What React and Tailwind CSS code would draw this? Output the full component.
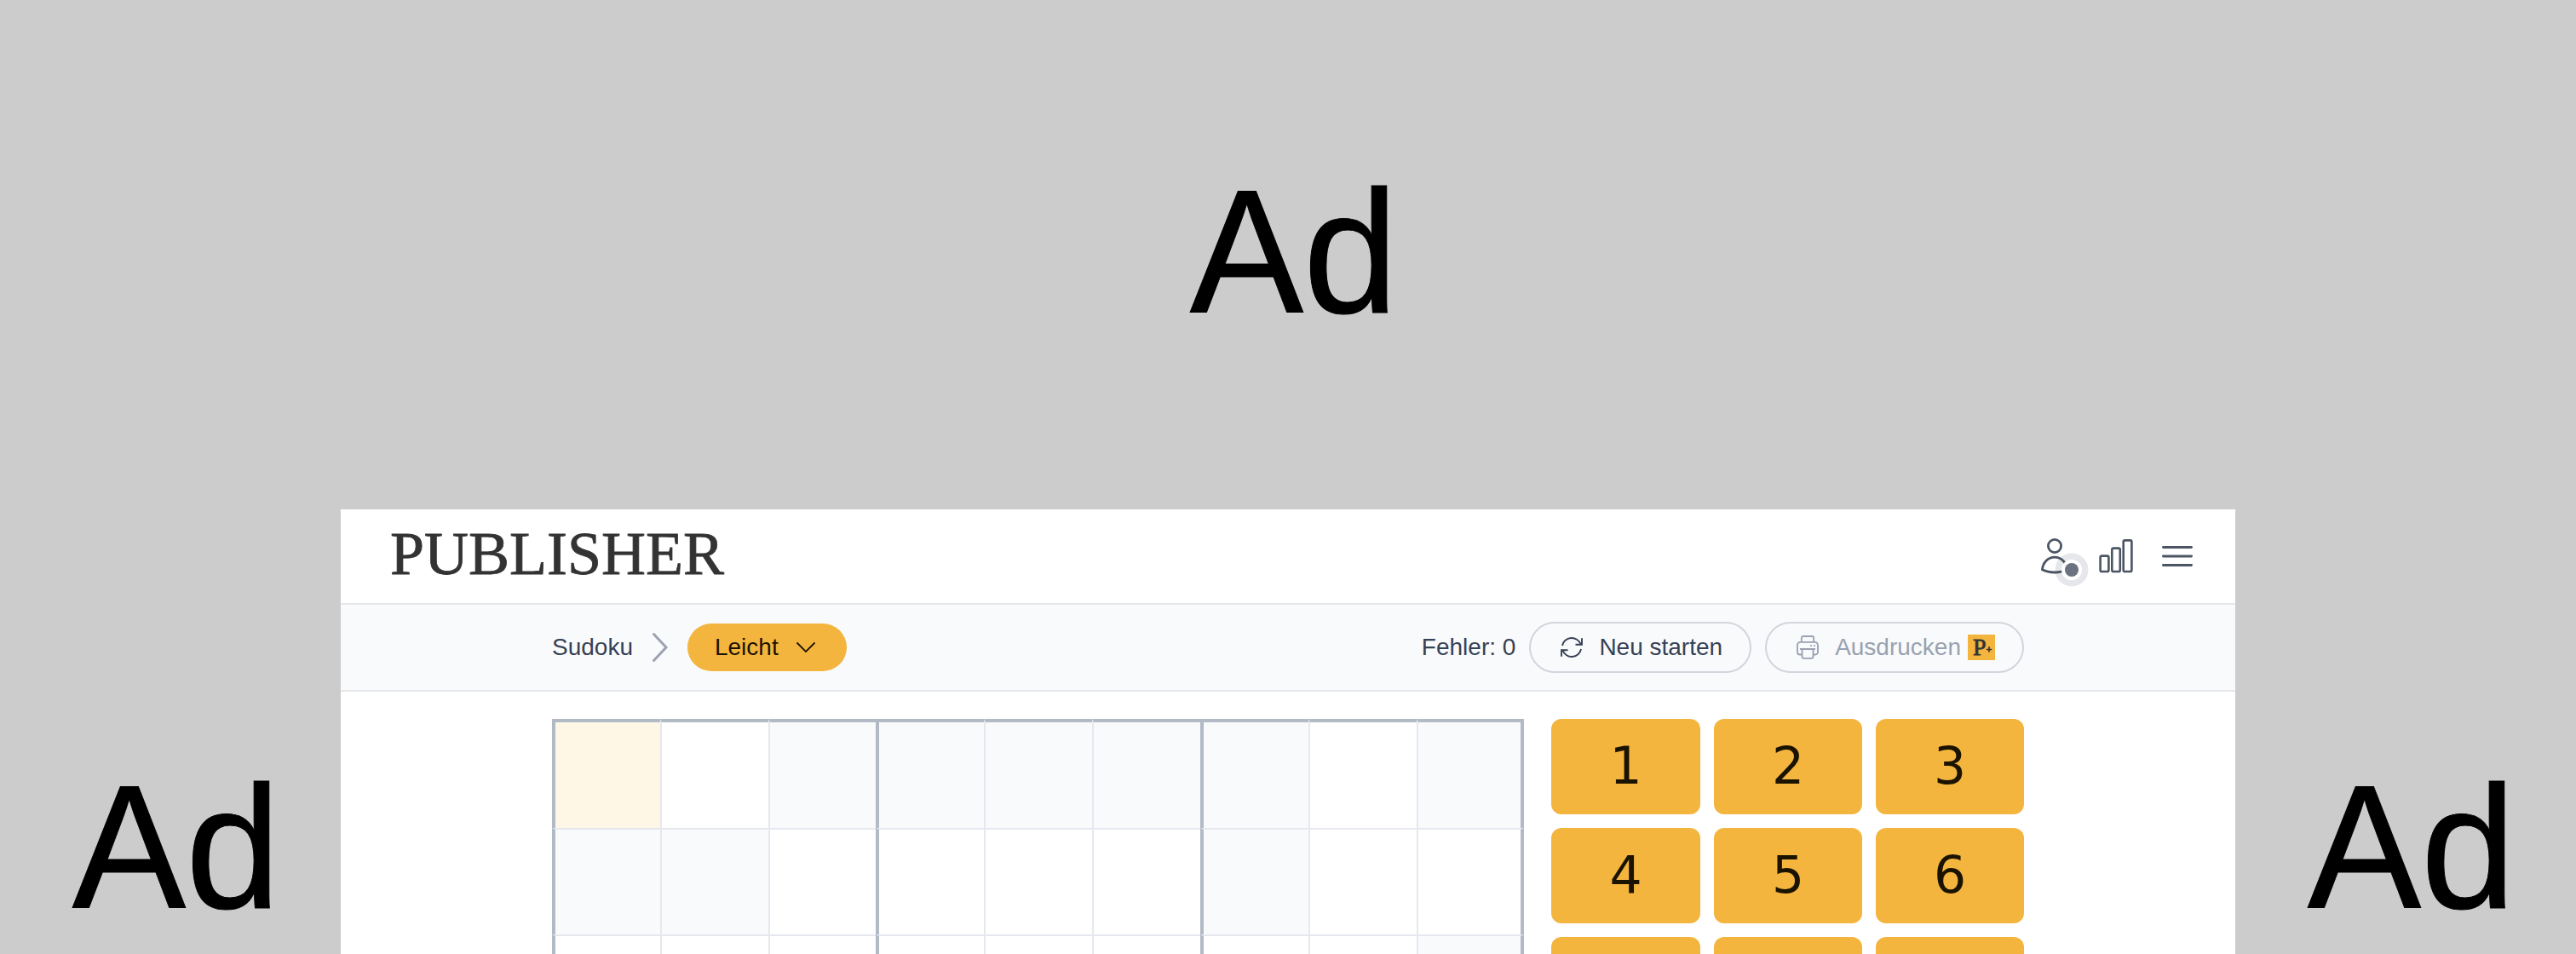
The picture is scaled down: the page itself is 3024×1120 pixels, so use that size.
import React, { useState } from 'react';
import { clsx } from 'clsx';

// s = shaded, w = white, a = active
const rows = ['awsssssws', 'sswwwwsww', 'wwwwwwwws'];

const Ad = ({ className }) => (
  <div className={clsx('flex items-center justify-center text-black', className)}>
    <span className="block text-[200px] leading-none scale-y-[1.03] [-webkit-text-stroke:1px_black]">Ad</span>
  </div>
);

const UserIcon = () => (
  <svg className="overflow-visible" width="48" height="48" viewBox="0 0 48 48" fill="none">
    <circle cx="44" cy="40" r="15.7" stroke="#e5e7eb" strokeWidth="7.5" />
    <g stroke="#4b5563" strokeWidth="2.8" strokeLinejoin="round">
      <circle cx="24" cy="12" r="7.6" />
      <path d="M9.4 39.8C10.3 31.4 16.2 25.2 24 25.2s13.700 6.200 14.600 14.600C34.100 42 29.200 43 24 43S13.900 42 9.400 39.800z" />
    </g>
    <circle cx="44" cy="40" r="12" fill="#fff" />
    <circle cx="44" cy="40" r="8" fill="#6b7280" />
  </svg>
);

const StatsIcon = () => (
  <svg width="48" height="48" viewBox="0 0 48 48" fill="none" stroke="#4b5563" strokeWidth="2.6">
    <rect x="5.6" y="23.6" width="9.8" height="18.4" rx="1.8" />
    <rect x="19.3" y="14.6" width="9.5" height="27.4" rx="1.8" />
    <rect x="32.700" y="5.400" width="9.700" height="36.600" rx="1.800" />
  </svg>
);

const MenuIcon = () => (
  <svg width="48" height="48" viewBox="0 0 48 48" fill="none" stroke="#4b5563" strokeWidth="2.8" strokeLinecap="round">
    <path d="M7.4 13.5h33.200M7.400 24h33.200M7.400 34.500h33.200" />
  </svg>
);

const RefreshIcon = () => (
  <svg width="32" height="32" viewBox="0 0 32 32" fill="none" stroke="currentColor" strokeWidth="1.9">
    <path d="M5 14A11.200 11.200 0 0 1 26.500 12.300M27 18A11.200 11.200 0 0 1 5.500 19.700" />
    <path d="M28 5.300v7.500h-7.500M4 26.700v-7.500h7.500" />
  </svg>
);

const PrinterIcon = () => (
  <svg width="32" height="32" viewBox="0 0 32 32" fill="none" stroke="currentColor" strokeWidth="1.8" strokeLinejoin="round">
    <path d="M8.800 9.800V5a2 2 0 0 1 2-2h10.400a2 2 0 0 1 2 2v4.800" />
    <path d="M9.500 24.500H7a3 3 0 0 1-3-3v-8.200a3.500 3.500 0 0 1 3.500-3.500h17a3.500 3.500 0 0 1 3.500 3.500v8.200a3 3 0 0 1-3 3h-2.500" />
    <path d="M9.500 18h13v8.800a2 2 0 0 1-2 2h-9a2 2 0 0 1-2-2zM7 18h18" />
    <path d="M19.200 14h1.600M23.200 14h1.600" />
  </svg>
);

const Header = () => (
  <header className="flex h-28 items-center justify-between border-b-2 border-gray-200 pl-[58px] pr-11">
    <h1 className="pb-1.5 font-['Liberation_Serif',serif] text-[72px] leading-none text-[#333] [-webkit-text-stroke:0.8px_#333]">
      PUBLISHER
    </h1>
    <div className="flex items-center gap-6">
      <UserIcon />
      <StatsIcon />
      <MenuIcon />
    </div>
  </header>
);

const Toolbar = ({ errors }) => (
  <div className="flex h-[102px] items-center justify-between border-b-2 border-gray-200 bg-[#f9fafc] px-[248px] text-[28px] leading-8 text-gray-700">
    <div className="flex items-center">
      <span>Sudoku</span>
      <svg className="ml-[22px]" width="20" height="36" viewBox="0 0 20 36" fill="none" stroke="#9ca3af" strokeWidth="3" strokeLinecap="round">
        <path d="M2.500 2.500L17 18L2.500 33.500" />
      </svg>
      <button className="ml-[22px] flex h-14 items-center rounded-full bg-[#f4b53f] pl-8 text-[#1a1300]">
        Leicht
        <svg className="ml-5 mr-9" width="24" height="14" viewBox="0 0 24 14" fill="none" stroke="currentColor" strokeWidth="1.8">
          <path d="M1.500 1.500L12 12L22.500 1.500" />
        </svg>
      </button>
    </div>
    <div className="flex items-center gap-4">
      <span>Fehler: {errors}</span>
      <button className="flex h-[60px] items-center gap-4 rounded-full border-2 border-gray-300 px-8">
        <RefreshIcon />
        Neu starten
      </button>
      <button className="flex h-[60px] items-center gap-4 rounded-full border-2 border-gray-300 px-8 text-gray-400">
        <PrinterIcon />
        <span className="flex items-center gap-2">
          Ausdrucken
          <span className="flex h-[30px] w-8 items-center bg-[#f4b53f] pl-1.5 font-['Liberation_Serif',serif] leading-none text-[#333] [-webkit-text-stroke:0.8px_#333]">
            P<span className="pt-1.5 text-xs leading-none">+</span>
          </span>
        </span>
      </button>
    </div>
  </div>
);

const Board = () => (
  <div className="grid grid-cols-[127px_127px_126px_127px_127px_127px_127px_127px_126px] grid-rows-[128px_125px_125px]">
    {rows.map((row, r) =>
      row.split('').map((cell, c) => (
        <div
          key={`${r}-${c}`}
          className={clsx(
            'border-[#e5e8ee]',
            r === 0 ? 'border-t-4 border-t-[#b2bac5]' : 'border-t-2',
            c % 3 === 0 ? 'border-l-4 border-l-[#b2bac5]' : 'border-l-2',
            c === 8 && 'border-r-4 border-r-[#b2bac5]',
            cell === 'a' && 'bg-[#fef7e6]',
            cell === 's' && 'bg-[#f9fafc]',
            cell === 'w' && 'bg-white'
          )}
        />
      ))
    )}
  </div>
);

const Keypad = () => (
  <div className="grid auto-rows-[112px] grid-cols-[175px_174px_174px] gap-4">
    {[1, 2, 3, 4, 5, 6, null, null, null].map((n, i) => (
      <button
        key={i}
        className="rounded-xl bg-[#f4b53f] pb-0.5 font-['DejaVu_Sans',sans-serif] text-[60px] leading-none text-[#1a1300]"
      >
        {n}
      </button>
    ))}
  </div>
);

export default function App() {
  const [errors] = useState(0);

  return (
    <div className="h-[1120px] w-[3024px] overflow-hidden bg-[#ccc] font-['Liberation_Sans',Arial,sans-serif]">
      <Ad className="h-[598px] pb-1.5 pl-3.5" />
      <div className="flex h-[522px]">
        <Ad className="w-[400px] pl-3.5 pt-[272px]" />
        <main className="h-full w-[2224px] overflow-hidden bg-white">
          <Header />
          <Toolbar errors={errors} />
          <div className="flex items-start justify-between px-[248px] pt-8">
            <Board />
            <Keypad />
          </div>
        </main>
        <Ad className="w-[400px] pl-3.5 pt-[272px]" />
      </div>
    </div>
  );
}
